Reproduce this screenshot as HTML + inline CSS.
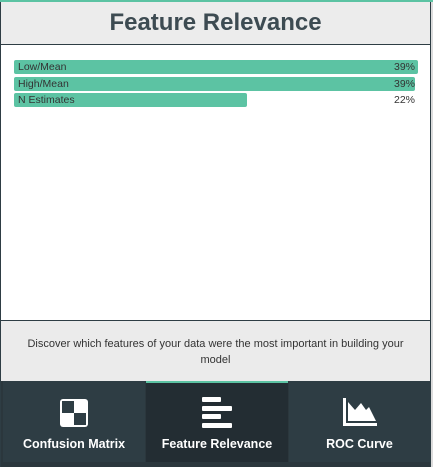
<!DOCTYPE html>
<html><head><style>
body{margin:0;width:433px;height:467px;background:#dcdcdc;font-family:"Liberation Sans",sans-serif;position:relative;overflow:hidden}
.wrap{position:absolute;left:0;top:0;width:431px;height:467px;border-left:1px solid #2e3d44;border-right:1px solid #2e3d44;box-sizing:border-box;background:#fff}
.top{position:absolute;left:0;top:0;width:433px;height:2px;background:#5cc3a3}
.hdr{position:absolute;left:1px;top:2px;width:429px;height:42px;background:#ececec;border-bottom:1px solid #2e3d44;text-align:center;font-weight:bold;font-size:24px;color:#3d4b52;line-height:42px}
.bar{position:absolute;left:14px;height:14px;background:#5cc3a3;border-radius:2px}
.lbl{position:absolute;left:18px;font-size:10.5px;color:#333;line-height:14px}
.pct{position:absolute;right:18px;font-size:10.5px;color:#333;line-height:14px}
.desc{position:absolute;left:1px;top:320px;width:429px;height:61px;background:#ebebeb;border-top:1px solid #2e3d44;text-align:center;font-size:11px;color:#333;line-height:16px;padding-top:15px;box-sizing:border-box}
.nav{position:absolute;left:1px;top:381px;width:429px;height:86px;background:#2b373d}
.tab{position:absolute;top:0;height:81px;background:#2e3d44;color:#fff;font-weight:bold;font-size:12.5px;text-align:center}
.tab span{position:absolute;left:0;right:0;top:56px}
.tab svg{position:absolute;left:50%;transform:translateX(-50%);top:17px}
</style></head><body>
<div class="wrap"></div>
<div class="top"></div>
<div class="hdr">Feature Relevance</div>
<div class="bar" style="top:60px;width:404px"></div>
<div class="bar" style="top:77px;width:401px"></div>
<div class="bar" style="top:93px;width:233px"></div>
<div class="lbl" style="top:60px">Low/Mean</div><div class="pct" style="top:60px">39%</div>
<div class="lbl" style="top:77px">High/Mean</div><div class="pct" style="top:77px">39%</div>
<div class="lbl" style="top:93px">N Estimates</div><div class="pct" style="top:93px">22%</div>
<div class="desc">Discover which features of your data were the most important in building your<br>model</div>
<div class="nav">
<div class="tab" style="left:2px;width:142px"><svg width="30" height="30" viewBox="0 0 30 30"><rect x="1" y="1" width="28" height="28" rx="3" fill="#fff"/><rect x="3" y="3" width="12" height="12" fill="#2e3d44"/><rect x="15" y="15" width="12" height="12" fill="#2e3d44"/></svg><span>Confusion Matrix</span></div>
<div class="tab" style="left:145px;width:142px;background:#232d33;border-top:2px solid #5cc3a3;top:0;height:79px"><svg width="32" height="32" viewBox="0 0 32 32" style="top:14px"><rect x="1" y="0" width="19" height="5" rx="1" fill="#fff"/><rect x="1" y="9" width="30" height="5" rx="1" fill="#fff"/><rect x="1" y="17" width="19" height="5" rx="1" fill="#fff"/><rect x="1" y="26" width="30" height="5" rx="1" fill="#fff"/></svg><span style="top:54px">Feature Relevance</span></div>
<div class="tab" style="left:288px;width:141px"><svg width="34" height="28" viewBox="0 0 34 28"><path d="M0 0h3v25h31v3H0z" fill="#fff"/><path d="M5 23V4l7 8 6-7 5 7 3-3 7 14z" fill="#fff"/></svg><span>ROC Curve</span></div>
</div>
</body></html>
